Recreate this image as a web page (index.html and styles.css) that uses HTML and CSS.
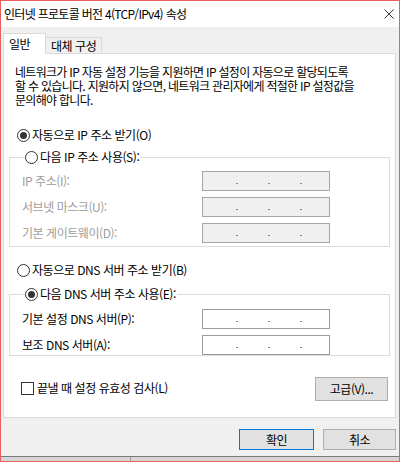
FILE: index.html
```html
<!DOCTYPE html>
<html lang="ko">
<head>
<meta charset="utf-8">
<title>인터넷 프로토콜 버전 4(TCP/IPv4) 속성</title>
<link rel="stylesheet" href="styles.css">
</head>
<body>
<div class="window">
  <div class="titlebar">
    <span class="title">인터넷 프로토콜 버전 4(TCP/IPv4) 속성</span>
    <svg class="close" width="10" height="10" viewBox="0 0 10 10"><path d="M0.5 0.5L9.5 9.5M9.5 0.5L0.5 9.5" stroke="#333" stroke-width="1" fill="none"/></svg>
  </div>
  <div class="body">
    <div class="tabs">
      <div class="tab active">일반</div>
      <div class="tab">대체 구성</div>
    </div>
    <div class="panel">
      <div class="desc">
        <div class="line">네트워크가 IP 자동 설정 기능을 지원하면 IP 설정이 자동으로 할당되도록</div>
        <div class="line">할 수 있습니다. 지원하지 않으면, 네트워크 관리자에게 적절한 IP 설정값을</div>
        <div class="line">문의해야 합니다.</div>
      </div>

      <label class="radio-row first"><span class="radio checked"></span>자동으로 IP 주소 받기(O)</label>

      <fieldset class="group ipgroup">
        <legend><span class="radio"></span>다음 IP 주소 사용(S):</legend>
        <div class="field disabled"><span class="lbl">IP 주소(I):</span><span class="ip"><i></i><i></i><i></i></span></div>
        <div class="field disabled"><span class="lbl">서브넷 마스크(U):</span><span class="ip"><i></i><i></i><i></i></span></div>
        <div class="field disabled"><span class="lbl">기본 게이트웨이(D):</span><span class="ip"><i></i><i></i><i></i></span></div>
      </fieldset>

      <label class="radio-row dns"><span class="radio"></span>자동으로 DNS 서버 주소 받기(B)</label>

      <fieldset class="group dnsgroup">
        <legend><span class="radio checked"></span>다음 DNS 서버 주소 사용(E):</legend>
        <div class="field"><span class="lbl">기본 설정 DNS 서버(P):</span><span class="ip"><i></i><i></i><i></i></span></div>
        <div class="field"><span class="lbl">보조 DNS 서버(A):</span><span class="ip"><i></i><i></i><i></i></span></div>
      </fieldset>

      <div class="bottom-row">
        <label class="check-row"><span class="check"></span>끝낼 때 설정 유효성 검사(L)</label>
        <button class="btn adv">고급(V)...</button>
      </div>
    </div>
    <div class="actions">
      <button class="btn primary">확인</button>
      <button class="btn">취소</button>
    </div>
  </div>
  <div class="statusstrip"><span class="seg"></span></div>
</div>
</body>
</html>
```
FILE: styles.css
```css
* { box-sizing: border-box; }
html, body { margin: 0; padding: 0; }
body {
  width: 400px;
  height: 462px;
  background: #f0f0f0;
  font-family: "Noto Sans CJK KR", "Noto Sans", sans-serif;
  font-size: 12px;
  letter-spacing: -0.45px;
  color: #000;
  overflow: hidden;
}
.window {
  width: 400px;
  height: 462px;
  border: 1px solid #e85f5f;
  display: flex;
  flex-direction: column;
  background: #f0f0f0;
}
.titlebar {
  height: 26px;
  background: #fff;
  display: flex;
  align-items: center;
  justify-content: space-between;
  padding: 0 5px 0 3px;
  flex: none;
}
.title { font-size: 12px; line-height: 16px; letter-spacing: -0.7px; }
.close { display: block; margin-top: -1px; }
.body {
  flex: 1;
  padding: 6px 3px 0 2px;
  display: flex;
  flex-direction: column;
}
.tabs {
  display: flex;
  align-items: flex-end;
  height: 20px;
  position: relative;
  z-index: 1;
}
.tab {
  height: 16px;
  padding: 0 5px;
  border: 1px solid #d9d9d9;
  border-bottom: none;
  background: #f0f0f0;
  line-height: 15px;
  font-size: 12px;
  white-space: nowrap;
  margin-left: -1px;
}
.tab.active {
  height: 21px;
  margin-left: 0;
  margin-bottom: -1px;
  background: #fff;
  padding: 0 0 0 5px;
  line-height: 19px;
  width: 43px;
}
.panel {
  background: #fff;
  border: 1px solid #d9d9d9;
  height: 365px;
  padding: 11px 7px 0 5px;
  display: flex;
  flex-direction: column;
}
.desc {
  margin: 0 0 0 6px;
  font-size: 12px;
  letter-spacing: -0.7px;
}
.desc .line {
  height: 14px;
  line-height: 14px;
  white-space: nowrap;
}
.radio-row, .check-row {
  display: flex;
  align-items: center;
  height: 16px;
  line-height: 16px;
}
.radio-row { padding-left: 8px; }
.radio-row.first { margin-top: 20px; }
.radio-row.dns { margin-top: 15px; }
.radio {
  width: 13px;
  height: 13px;
  border: 1px solid #333;
  border-radius: 50%;
  background: #fff;
  display: inline-block;
  margin-right: 2px;
  position: relative;
  flex: none;
}
.radio.checked::after {
  content: "";
  position: absolute;
  left: 2px; top: 2px;
  width: 7px; height: 7px;
  border-radius: 50%;
  background: #333;
}
.group {
  margin: 6px 0 0 0;
  border: 1px solid #dcdcdc;
  padding: 0 0 0 12px;
  min-width: 0;
  width: 381px;
}
.group legend {
  padding: 0 1px 0 0;
  margin-left: 3px;
  display: flex;
  align-items: center;
  height: 16px;
  line-height: 16px;
}
.ipgroup { height: 98px; padding-top: 6px; }
.dnsgroup { height: 70px; padding-top: 7px; margin-top: 8px; }
.field {
  display: flex;
  align-items: center;
  justify-content: space-between;
  height: 20px;
  margin-bottom: 6px;
  padding-right: 59px;
}
.field .lbl { line-height: 16px; }
.field.disabled .lbl { color: #9d9d9d; }
.ip {
  width: 128px;
  height: 20px;
  border: 1px solid #9c9c9c;
  background: #fff;
  display: flex;
  justify-content: center;
  gap: 30px;
  padding-top: 11px;
  padding-left: 6px;
}
.field.disabled .ip {
  background: #f0f0f0;
  border-color: #a6a6a6;
}
.ip i {
  display: block;
  width: 2px;
  height: 1px;
  background: #8a8a9a;
}
.bottom-row {
  display: flex;
  justify-content: space-between;
  align-items: center;
  margin-top: 19px;
  padding-left: 12px;
}
.check {
  width: 13px;
  height: 13px;
  border: 1px solid #333;
  background: #fff;
  margin-right: 3px;
  flex: none;
}
.btn {
  font-family: "Noto Sans CJK KR", "Noto Sans", sans-serif;
  font-size: 12px;
  letter-spacing: -0.45px;
  height: 24px;
  background: #e1e1e1;
  border: 1px solid #adadad;
  color: #000;
  padding: 0;
  line-height: 20px;
}
.btn.adv { width: 73px; margin-top: 2px; }
.actions {
  display: flex;
  justify-content: flex-end;
  gap: 9px;
  margin-top: 11px;
  padding-right: 0;
}
.actions .btn { width: 75px; height: 21px; line-height: 17px; }
.actions .btn:last-child { width: 73px; }
.btn.primary { border: 1px solid #0078d7; }
.statusstrip {
  margin-top: auto;
  height: 5px;
  border-top: 1px solid #7a7a7a;
  background: #d6d6d6;
  position: relative;
  flex: none;
}
.seg {
  position: absolute;
  left: 129px;
  top: 0;
  bottom: 0;
  width: 1px;
  background: #9a9a9a;
}
```
